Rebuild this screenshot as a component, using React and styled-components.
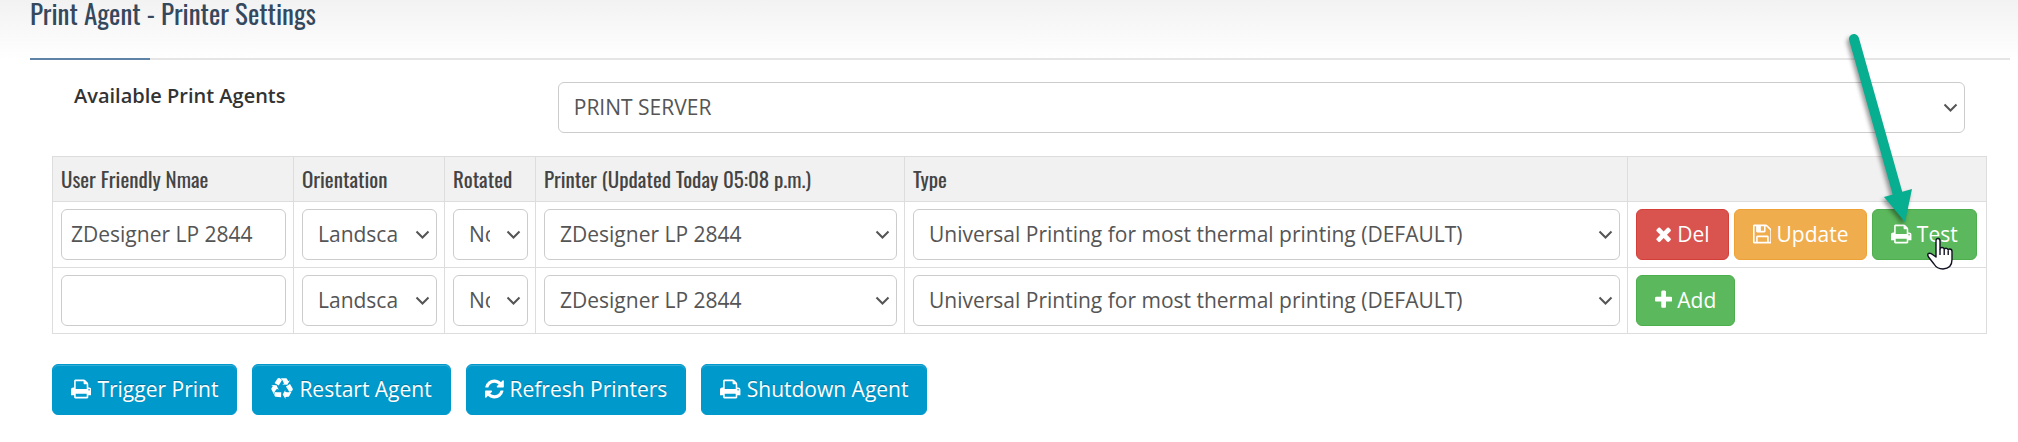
import React from "react";
import styled, { createGlobalStyle } from "styled-components";

const GlobalStyle = createGlobalStyle`
  * {
    box-sizing: border-box;
  }
  body {
    margin: 0;
    background: #fff;
    color: #333;
    font-family: "Open Sans", "Noto Sans", sans-serif;
    font-size: 21px;
    line-height: 30px;
  }
`;

const Header = styled.header`
  padding: 0 8px 0 30px;
  background: linear-gradient(#f2f2f2, #fff);
`;

const Title = styled.h1`
  margin: 0;
  padding-bottom: 32px;
  border-bottom: 2px solid #e5e5e5;
  color: #34495e;
  font-family: "Oswald", "Liberation Sans Narrow", sans-serif;
  font-size: 27px;
  font-weight: 400;
  line-height: 26px;
  position: relative;

  &::after {
    content: "";
    position: absolute;
    left: 0;
    bottom: -2px;
    width: 120px;
    height: 2px;
    background: #5f83a7;
  }
`;

const Main = styled.main`
  padding: 22px 31px 26px 52px;
`;

const AgentRow = styled.div`
  display: grid;
  grid-template-columns: 1fr 3fr;
  margin-bottom: 23px;

  > * {
    margin: 0 22px;
  }
`;

const AgentLabel = styled.label`
  font-size: 20px;
  font-weight: 600;
  line-height: 28px;
`;

const SelectBox = styled.div`
  display: grid;
  align-items: center;

  > * {
    grid-area: 1 / 1;
  }
`;

const Control = styled.input`
  display: block;
  width: 100%;
  height: 51px;
  padding: 0 9px 2px;
  border: 1px solid #ccc;
  border-radius: 6px;
  background: #fff;
  color: #555;
  font: inherit;
`;

const Dropdown = styled(Control)`
  appearance: none;
  padding: 0 37px 2px 15px;
  text-overflow: clip;
`;

const Chevron = styled.svg`
  justify-self: end;
  margin-right: 7px;
  width: 15px;
  height: 9px;
  fill: none;
  stroke: #555;
  stroke-width: 2;
  pointer-events: none;
`;

const Table = styled.table`
  width: 100%;
  table-layout: fixed;
  border-collapse: collapse;
  margin-bottom: 30px;
`;

const Column = styled.col`
  width: ${props => props.$width};
`;

const HeadCell = styled.th`
  height: 45px;
  padding: 0 8px;
  border: 1px solid #ddd;
  background: #f1f1f1;
  color: #444;
  font-family: "Oswald", "Liberation Sans Narrow", sans-serif;
  font-size: 21px;
  font-weight: 400;
  text-align: left;
  white-space: nowrap;
`;

const Cell = styled.td`
  padding: 7px 7px 7px 8px;
  border: 1px solid #ddd;
`;

const Buttons = styled.div`
  display: flex;
  gap: ${props => props.$gap};
`;

const Button = styled.button`
  position: relative;
  display: flex;
  align-items: center;
  gap: 5px;
  height: 51px;
  padding: 0 18px 2px;
  border: 1px solid ${props => props.$border};
  border-radius: 6px;
  background: ${props => props.$color};
  color: #fff;
  font: inherit;
  white-space: nowrap;
  cursor: pointer;
`;

const AgentButton = styled(Button).attrs({ $color: "#0099cc", $border: "#0099cc" })`
  gap: 6px;
  box-shadow: inset 0 1px 0 rgba(255, 255, 255, 0.2);
  text-shadow: 0 -1px 0 rgba(0, 0, 0, 0.25);
`;

const Glyph = styled.svg`
  height: 22px;
  fill: currentColor;
`;

const Pointer = styled.svg`
  position: absolute;
  right: 64px;
  bottom: 30px;
  width: 80px;
  height: 210px;
  overflow: visible;
  filter: drop-shadow(-2px 3px 2px rgba(0, 0, 0, 0.4));
  pointer-events: none;
`;

const Hand = styled.svg`
  position: absolute;
  right: 23px;
  bottom: -12px;
  width: 28px;
  height: 34px;
  pointer-events: none;
`;

const icons = {
  times: {
    box: "192 0 1408 1792",
    path:
      "M1490 1322q0 40-28 68l-136 136q-28 28-68 28t-68-28l-294-294-294 294q-28 28-68 28t-68-28l-136-136q-28-28-28-68t28-68l294-294-294-294q-28-28-28-68t28-68l136-136q28-28 68-28t68 28l294 294 294-294q28-28 68-28t68 28l136 136q28 28 28 68t-28 68l-294 294 294 294q28 28 28 68z"
  },
  plus: {
    box: "192 0 1408 1792",
    path:
      "M1600 736v192q0 40-28 68t-68 28h-416v416q0 40-28 68t-68 28h-192q-40 0-68-28t-28-68v-416h-416q-40 0-68-28t-28-68v-192q0-40 28-68t68-28h416v-416q0-40 28-68t68-28h192q40 0 68 28t28 68v416h416q40 0 68 28t28 68z"
  },
  print: {
    box: "64 0 1664 1792",
    path:
      "M448 1536h896v-256h-896v256zm0-640h896v-384h-160q-40 0-68-28t-28-68v-160h-640v640zm1152 64q0-26-19-45t-45-19-45 19-19 45 19 45 45 19 45-19 19-45zm128 0v416q0 13-9.5 22.5t-22.5 9.5h-224v160q0 40-28 68t-68 28h-960q-40 0-68-28t-28-68v-160h-224q-13 0-22.5-9.5t-9.5-22.5v-416q0-79 56.5-135.5t135.5-56.5h64v-544q0-40 28-68t68-28h672q40 0 88 20t76 48l152 152q28 28 48 76t20 88v256h64q79 0 135.5 56.5t56.5 135.5z"
  },
  save: {
    box: "128 0 1536 1792",
    path:
      "M512 1536h768v-384h-768v384zm896 0h128v-896q0-14-10-38.5t-20-34.5l-281-281q-10-10-34-20t-39-10v416q0 40-28 68t-68 28h-576q-40 0-68-28t-28-68v-416h-128v1280h128v-416q0-40 28-68t68-28h832q40 0 68 28t28 68v416zm-384-928v-320q0-13-9.5-22.5t-22.5-9.5h-192q-13 0-22.5 9.5t-9.5 22.5v320q0 13 9.5 22.5t22.5 9.5h192q13 0 22.5-9.5t9.5-22.5zm640 32v928q0 40-28 68t-68 28h-1344q-40 0-68-28t-28-68v-1344q0-40 28-68t68-28h928q40 0 88 20t76 48l280 280q28 28 48 76t20 88z"
  },
  recycle: {
    box: "0 0 1792 1792",
    path:
      "M836 1169l-15 368-2 22-420-29q-36-3-67-31.5t-47-65.5q-11-27-14.5-55t4-65 12-55 21.500-64 19-53q78 12 509 28zm-387-586l180 379-147-92q-63 72-111.5 144.5t-72.500 125-39.500 94.500-18.500 63l-4 21-190-357q-17-26-18-56t6-47l8-18q35-63 114-188l-140-86zm1231 517l-188 359q-12 29-36.500 46.500t-43.500 20.500l-18 4q-71 7-219 12l8 164-230-367 211-362 7 173q170 16 283 5t170-33zm-785-924q-47 63-265 435l-317-187-19-12 225-356q20-31 60-45t80-10q24 2 48.500 12t42 21 41.500 33 36 34.500 36 39.500 32 35zm655 307l212 363q18 37 12.500 76t-27.500 74q-13 20-33 37t-38 28-48.500 22-47 16-51.500 14-46 12q-34-72-265-436l313-195zm-143-226l142-83-220 373-419-20 151-86q-34-89-75-166t-75.500-123.500-64.500-80-47-46.500l-17-13 405 1q31-3 58 10.500t39 28.500l11 15q39 61 112 190z"
  },
  refresh: {
    box: "128 0 1536 1792",
    path:
      "M1639 1056q0 5-1 7-64 268-268 434.5t-478 166.5q-146 0-282.5-55t-243.5-157l-129 129q-19 19-45 19t-45-19-19-45v-448q0-26 19-45t45-19h448q26 0 45 19t19 45-19 45l-137 137q71 66 161 102t187 36q134 0 250-65t186-179q11-17 53-117 8-23 30-23h192q13 0 22.5 9.5t9.5 22.5zm25-800v448q0 26-19 45t-45 19h-448q-26 0-45-19t-19-45 19-45l138-138q-148-137-349-137-134 0-250 65t-186 179q-11 17-53 117-8 23-30 23h-199q-13 0-22.5-9.5t-9.5-22.5v-7q65-268 270-434.5t480-166.5q146 0 284 55.5t245 156.5l130-129q19-19 45-19t45 19 19 45z"
  }
};

function Icon({ name }) {
  return (
    <Glyph viewBox={icons[name].box} aria-hidden="true">
      <path d={icons[name].path} />
    </Glyph>
  );
}

function Select({ options, ...rest }) {
  return (
    <SelectBox>
      <Dropdown as="select" {...rest}>
        {options.map(option => (
          <option key={option}>{option}</option>
        ))}
      </Dropdown>
      <Chevron viewBox="0 0 15 9" aria-hidden="true">
        <path d="M1.5 1.5l6 6 6-6" />
      </Chevron>
    </SelectBox>
  );
}

function PrinterRow({ name, children }) {
  return (
    <tr>
      <Cell>
        <Control type="text" aria-label="User friendly name" defaultValue={name} />
      </Cell>
      <Cell>
        <Select aria-label="Orientation" options={["Landscape", "Portrait"]} />
      </Cell>
      <Cell>
        <Select aria-label="Rotated" options={["No", "Yes"]} />
      </Cell>
      <Cell>
        <Select aria-label="Printer" options={["ZDesigner LP 2844"]} />
      </Cell>
      <Cell>
        <Select
          aria-label="Type"
          options={["Universal Printing for most thermal printing (DEFAULT)"]}
        />
      </Cell>
      <Cell>
        <Buttons $gap="5px">{children}</Buttons>
      </Cell>
    </tr>
  );
}

export default function App() {
  return (
    <>
      <GlobalStyle />
      <Header>
        <Title>Print Agent - Printer Settings</Title>
      </Header>
      <Main>
        <AgentRow>
          <AgentLabel htmlFor="agent">Available Print Agents</AgentLabel>
          <Select id="agent" options={["PRINT SERVER"]} />
        </AgentRow>
        <Table>
          <colgroup>
            <Column $width="241px" />
            <Column $width="151px" />
            <Column $width="91px" />
            <Column $width="369px" />
            <Column />
            <Column $width="359px" />
          </colgroup>
          <thead>
            <tr>
              <HeadCell>User Friendly Nmae</HeadCell>
              <HeadCell>Orientation</HeadCell>
              <HeadCell>Rotated</HeadCell>
              <HeadCell>Printer (Updated Today 05:08 p.m.)</HeadCell>
              <HeadCell>Type</HeadCell>
              <HeadCell />
            </tr>
          </thead>
          <tbody>
            <PrinterRow name="ZDesigner LP 2844">
              <Button $color="#d9534f" $border="#d43f3a">
                <Icon name="times" />
                Del
              </Button>
              <Button $color="#f0ad4e" $border="#eea236">
                <Icon name="save" />
                Update
              </Button>
              <Button $color="#5cb85c" $border="#4cae4c">
                <Icon name="print" />
                Test
                <Pointer viewBox="0 0 80 210" aria-hidden="true">
                  <path
                    d="M22 20L66 176"
                    stroke="#08ae90"
                    strokeWidth="10"
                    strokeLinecap="round"
                  />
                  <path d="M52 178L80 170L73 203Z" fill="#08ae90" />
                </Pointer>
                <Hand viewBox="0 0 28 34" aria-hidden="true">
                  <path
                    d="M11 20V4q0-2.500 2-2.500t2 2.500v8q0-1.500 2-1.500t2.200 2q0-1.300 1.800-1.300t2.200 2q0-1.200 1.500-1.200 2.300 0 2.300 2.500v8q0 9-9 9.500-6 0-9-5L3.500 20q-1.500-3 0-3.500 2-1 4 1z"
                    fill="#fff"
                    stroke="#112"
                    strokeWidth="1.400"
                    strokeLinejoin="round"
                  />
                  <path d="M15 12v6M19.200 13v5M23.200 14v4" stroke="#112" strokeWidth="1.400" />
                </Hand>
              </Button>
            </PrinterRow>
            <PrinterRow name="">
              <Button $color="#5cb85c" $border="#4cae4c">
                <Icon name="plus" />
                Add
              </Button>
            </PrinterRow>
          </tbody>
        </Table>
        <Buttons $gap="15px">
          <AgentButton>
            <Icon name="print" />
            Trigger Print
          </AgentButton>
          <AgentButton>
            <Icon name="recycle" />
            Restart Agent
          </AgentButton>
          <AgentButton>
            <Icon name="refresh" />
            Refresh Printers
          </AgentButton>
          <AgentButton>
            <Icon name="print" />
            Shutdown Agent
          </AgentButton>
        </Buttons>
      </Main>
    </>
  );
}
